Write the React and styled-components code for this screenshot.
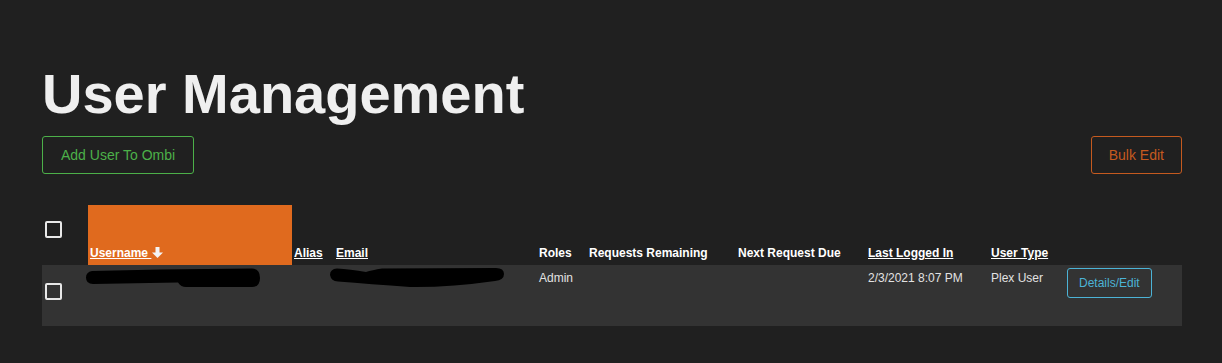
import React from "react";
import styled, { createGlobalStyle } from "styled-components";

const GlobalStyle = createGlobalStyle`
  html, body {
    margin: 0;
    padding: 0;
    background: #202020;
  }
  body {
    font-family: "Liberation Sans", Arial, sans-serif;
    color: #e6e6e6;
  }
`;

const Page = styled.div`
  padding: 62px 40px 37px 42px;
  background: #202020;
`;

const Title = styled.h1`
  margin: 0 0 10px 0;
  font-size: 56px;
  line-height: 64px;
  font-weight: bold;
  color: #efefef;
`;

const Toolbar = styled.div`
  display: flex;
  justify-content: space-between;
  align-items: center;
`;

const OutlineButton = styled.button`
  height: ${(p) => (p.$small ? "30px" : "38px")};
  padding: 0 ${(p) => p.$padX ?? 18}px;
  background: transparent;
  border: 1px solid ${(p) => p.$color};
  border-radius: 3px;
  color: ${(p) => p.$color};
  font-family: "Liberation Sans", Arial, sans-serif;
  font-size: ${(p) => (p.$small ? "12px" : "14px")};
  cursor: pointer;
`;

const Table = styled.table`
  margin-top: 31px;
  width: 1140px;
  border-collapse: collapse;
  table-layout: fixed;
`;

const HeadRow = styled.tr`
  height: 60px;
`;

const BodyRow = styled.tr`
  height: 61px;
  background: #333333;
`;

const Th = styled.th`
  padding: 0 0 4px ${(p) => p.$pad ?? 2}px;
  vertical-align: bottom;
  text-align: left;
  font-size: 12px;
  line-height: 15px;
  font-weight: bold;
  color: #ffffff;
  white-space: nowrap;
  background: ${(p) => (p.$active ? "#e06a1e" : "transparent")};
  text-decoration: ${(p) => (p.$sortable ? "underline" : "none")};
`;

const CheckCell = styled.td`
  padding: ${(p) => p.$top}px 0 0 3px;
  vertical-align: top;
`;

const Td = styled.td`
  padding: ${(p) => p.$top ?? 6}px 0 0 ${(p) => p.$pad ?? 2}px;
  vertical-align: top;
  font-size: 12px;
  line-height: 15px;
  color: #e2e2e2;
  white-space: nowrap;
`;

const Checkbox = styled.span`
  display: block;
  width: 13px;
  height: 13px;
  border: 2px solid #e8e8e8;
  border-radius: 2px;
`;

const SortLink = styled.span`
  text-decoration: underline;
`;

const Arrow = styled.svg`
  vertical-align: -1px;
  margin-left: 1px;
`;

const Redaction = styled.svg`
  display: block;
  margin: ${(p) => p.$offset};
`;

const columns = [46, 204, 41, 204, 50, 149, 130, 123, 76, 117];

export default function App() {
  return (
    <>
      <GlobalStyle />
      <Page>
        <Title>User Management</Title>
        <Toolbar>
          <OutlineButton $color="#4cb049" $padX={18}>Add User To Ombi</OutlineButton>
          <OutlineButton $color="#c55a1f" $padX={17}>Bulk Edit</OutlineButton>
        </Toolbar>
        <Table>
          <colgroup>
            {columns.map((w, i) => (
              <col key={i} style={{ width: w }} />
            ))}
          </colgroup>
          <thead>
            <HeadRow>
              <CheckCell as="th" $top={16}>
                <Checkbox />
              </CheckCell>
              <Th $active>
                <SortLink>Username </SortLink>
                <Arrow width="11" height="11" viewBox="0 0 11 11">
                  <path d="M3.5 0h4v5.5h3.5L5.5 11 0 5.5h3.5z" fill="#f4f4f4" />
                </Arrow>
              </Th>
              <Th $sortable>Alias</Th>
              <Th $sortable $pad={3}>Email</Th>
              <Th>Roles</Th>
              <Th>Requests Remaining</Th>
              <Th>Next Request Due</Th>
              <Th $sortable>Last Logged In</Th>
              <Th $sortable>User Type</Th>
              <Th />
            </HeadRow>
          </thead>
          <tbody>
            <BodyRow>
              <CheckCell $top={18}>
                <Checkbox />
              </CheckCell>
              <Td $top={1} $pad={0}>
                <Redaction $offset="0 0 0 -4px" width="180" height="24" viewBox="0 0 180 24">
                  <path
                    d="M8 5 Q2 6 2 11.5 Q2 18 9 18 L94 16.5 Q97 21 102 21 L168 21 Q176 21 176 12 Q176 3 168 2.5 L76 3.5 Z"
                    fill="#000"
                  />
                </Redaction>
              </Td>
              <Td />
              <Td $top={1} $pad={0}>
                <Redaction $offset="0 0 0 -5px" width="180" height="24" viewBox="0 0 180 24">
                  <path
                    d="M9 2.5 Q2 3 2 9 Q3 15 10 15.5 Q42 18 82 21 Q122 21.5 167 15 Q176 14 176 8 Q176 2 168 2 L54 2.5 Q44 4 38 6 Q22 3 9 2.5 Z"
                    fill="#000"
                  />
                </Redaction>
              </Td>
              <Td>Admin</Td>
              <Td />
              <Td />
              <Td>2/3/2021 8:07 PM</Td>
              <Td>Plex User</Td>
              <Td $top={3}>
                <OutlineButton $small $padX={11} $color="#4cb3d6">Details/Edit</OutlineButton>
              </Td>
            </BodyRow>
          </tbody>
        </Table>
      </Page>
    </>
  );
}
